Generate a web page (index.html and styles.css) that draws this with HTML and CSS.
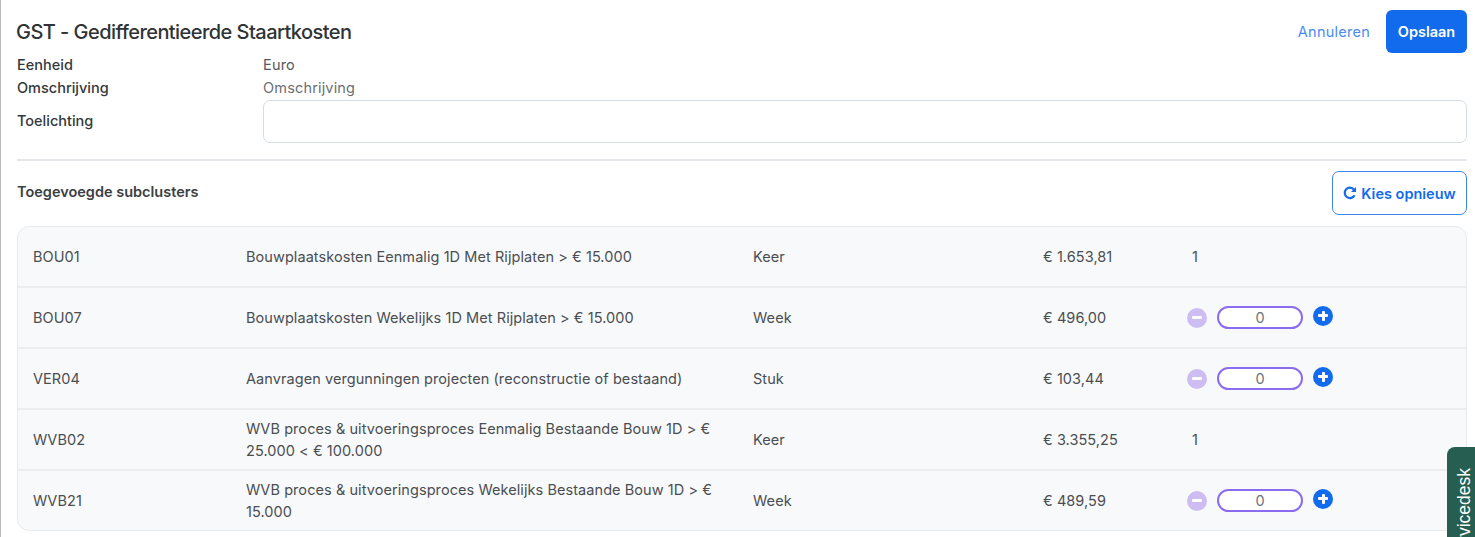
FILE: index.html
```html
<!DOCTYPE html>
<html lang="en">
<head>
    <meta charset="UTF-8">
    <meta name="viewport" content="width=device-width, initial-scale=1.0">
    <title>GST - Gedifferentieerde Staartkosten</title>
    <link rel="stylesheet" href="styles.css">
</head>
<body>
    <div class="page">
        <!-- title and actions -->
        <header class="topBar">
            <h1>GST - Gedifferentieerde Staartkosten</h1>
            <div class="actions">
                <a class="cancel">Annuleren</a>
                <button class="save">Opslaan</button>
            </div>
        </header>

        <!-- general fields -->
        <section class="fields">
            <div class="fieldRow">
                <span class="fieldLabel">Eenheid</span>
                <span class="fieldValue">Euro</span>
            </div>
            <div class="fieldRow">
                <span class="fieldLabel">Omschrijving</span>
                <span class="fieldValue muted">Omschrijving</span>
            </div>
            <div class="fieldRow noteRow">
                <label class="fieldLabel" for="note">Toelichting</label>
                <input class="noteInput" type="text" id="note">
            </div>
        </section>
        <hr>

        <!-- list of subclusters -->
        <div class="listHead">
            <h2>Toegevoegde subclusters</h2>
            <button class="retry">
                <svg width="14" height="14" viewBox="0 0 14 14" fill="none">
                    <path d="M11.6 9.2A5.2 5.2 0 1 1 11 3.6" stroke="#116bec" stroke-width="2.2"/>
                    <path d="M13 1v5H8z" fill="#116bec"/>
                </svg>
                Kies opnieuw
            </button>
        </div>

        <div class="list">
            <div class="row">
                <span>BOU01</span>
                <span>Bouwplaatskosten Eenmalig 1D Met Rijplaten &gt; € 15.000</span>
                <span>Keer</span>
                <span>€ 1.653,81</span>
                <span class="count">1</span>
            </div>
            <div class="row">
                <span>BOU07</span>
                <span>Bouwplaatskosten Wekelijks 1D Met Rijplaten &gt; € 15.000</span>
                <span>Week</span>
                <span>€ 496,00</span>
                <div class="stepper">
                    <span class="minus"><i></i></span>
                    <span class="amount">0</span>
                    <span class="plus"><i></i><b></b></span>
                </div>
            </div>
            <div class="row">
                <span>VER04</span>
                <span>Aanvragen vergunningen projecten (reconstructie of bestaand)</span>
                <span>Stuk</span>
                <span>€ 103,44</span>
                <div class="stepper">
                    <span class="minus"><i></i></span>
                    <span class="amount">0</span>
                    <span class="plus"><i></i><b></b></span>
                </div>
            </div>
            <div class="row">
                <span>WVB02</span>
                <span>WVB proces &amp; uitvoeringsproces Eenmalig Bestaande Bouw 1D &gt; € 25.000 &lt; € 100.000</span>
                <span>Keer</span>
                <span>€ 3.355,25</span>
                <span class="count">1</span>
            </div>
            <div class="row">
                <span>WVB21</span>
                <span>WVB proces &amp; uitvoeringsproces Wekelijks Bestaande Bouw 1D &gt; € 15.000</span>
                <span>Week</span>
                <span>€ 489,59</span>
                <div class="stepper">
                    <span class="minus"><i></i></span>
                    <span class="amount">0</span>
                    <span class="plus"><i></i><b></b></span>
                </div>
            </div>
        </div>
    </div>

    <div class="serviceTab"><span>Servicedesk</span></div>
</body>
</html>
```

FILE: styles.css
```css
* {
    padding: 0px;
    margin: 0px;
    box-sizing: border-box;
}
html, body {
    height: 100%;
    overflow: hidden;
}
body {
    background-color: white;
    color: #3c4043;
    font-family: Inter, "Noto Sans", sans-serif;
    font-size: 14.5px;
    border-left: 1px solid #b9b9b9;
}
.page {
    padding: 10px 8px 0px 16px;
}
.topBar {
    display: flex;
    justify-content: space-between;
    align-items: center;
    height: 43px;
}
h1 {
    margin-left: -1px;
    font-size: 20px;
    font-weight: 500;
    letter-spacing: -0.55px;
    color: #2f3336;
}
.actions {
    display: flex;
    align-items: center;
    gap: 16px;
}
.cancel {
    color: #4a8cf0;
    letter-spacing: 0.25px;
}
.save {
    background-color: #116bec;
    color: white;
    border: none;
    border-radius: 6px;
    width: 81px;
    height: 43px;
    font-family: inherit;
    font-size: 14.5px;
    font-weight: 600;
}
.fieldRow {
    display: flex;
    align-items: center;
    height: 23px;
}
.fieldLabel {
    width: 246px;
    flex-shrink: 0;
    font-weight: 500;
    color: #34383b;
}
.fieldValue {
    color: #55595c;
    letter-spacing: 0.17px;
}
.muted {
    color: #6b6f72;
}
.noteRow {
    height: 44px;
}
.noteRow .fieldLabel {
    margin-bottom: 2px;
}
.noteInput {
    flex: 1;
    height: 43px;
    border: 1px solid #d5dce6;
    border-radius: 7px;
    background: white;
}
hr {
    border: none;
    height: 2px;
    background-color: #e4e7ec;
    margin-top: 16px;
}
.listHead {
    display: flex;
    justify-content: space-between;
    align-items: center;
    margin-top: 10px;
    height: 44px;
}
h2 {
    margin-bottom: 4px;
    font-size: 14.5px;
    font-weight: 600;
    color: #3c4043;
}
.retry {
    display: flex;
    align-items: center;
    justify-content: center;
    gap: 4px;
    width: 135px;
    height: 44px;
    background: white;
    color: #116bec;
    border: 1px solid #3c85ee;
    border-radius: 7px;
    font-family: inherit;
    font-size: 14.5px;
    font-weight: 600;
}
.list {
    margin-top: 11px;
    background-color: #f8f9fb;
    border: 1px solid #e8eaed;
    border-radius: 12px;
}
.row {
    display: grid;
    grid-template-columns: 213px 507px 290px 144px 1fr;
    align-items: center;
    height: 61px;
    padding-left: 15px;
    border-bottom: 2px solid #ebedf0;
    color: #4a4e51;
    letter-spacing: 0.07px;
    line-height: 22px;
}
.row:last-child {
    border-bottom: none;
    height: 59px;
}
.row span:nth-child(2) {
    max-width: 470px;
}
.count {
    padding-left: 5px;
}
.stepper {
    display: flex;
    align-items: center;
    gap: 10px;
}
.minus, .plus {
    position: relative;
    display: block;
    width: 20px;
    height: 20px;
    border-radius: 50%;
    flex-shrink: 0;
}
.minus {
    background-color: #cdbdf3;
}
.plus {
    background-color: #116bec;
    top: -2px;
}
.minus i, .plus i, .plus b {
    position: absolute;
    left: 5px;
    top: 8.5px;
    width: 10px;
    height: 3px;
    border-radius: 1px;
    background-color: white;
}
.plus b {
    left: 8.5px;
    top: 5px;
    width: 3px;
    height: 10px;
}
.amount {
    width: 86px;
    height: 23px;
    border: 2px solid #8b6cf0;
    border-radius: 12px;
    background: white;
    text-align: center;
    line-height: 20px;
    color: #6f7376;
}
.serviceTab {
    position: absolute;
    left: 1447px;
    top: 447px;
    width: 28px;
    height: 90px;
    overflow: hidden;
    background-color: #265e52;
    border-radius: 8px 0px 0px 0px;
    color: white;
}
.serviceTab span {
    position: absolute;
    left: 7px;
    top: 21px;
    writing-mode: vertical-rl;
    transform: rotate(180deg);
    font-family: "Liberation Sans", sans-serif;
    font-size: 17.5px;
    line-height: 20px;
}
```
